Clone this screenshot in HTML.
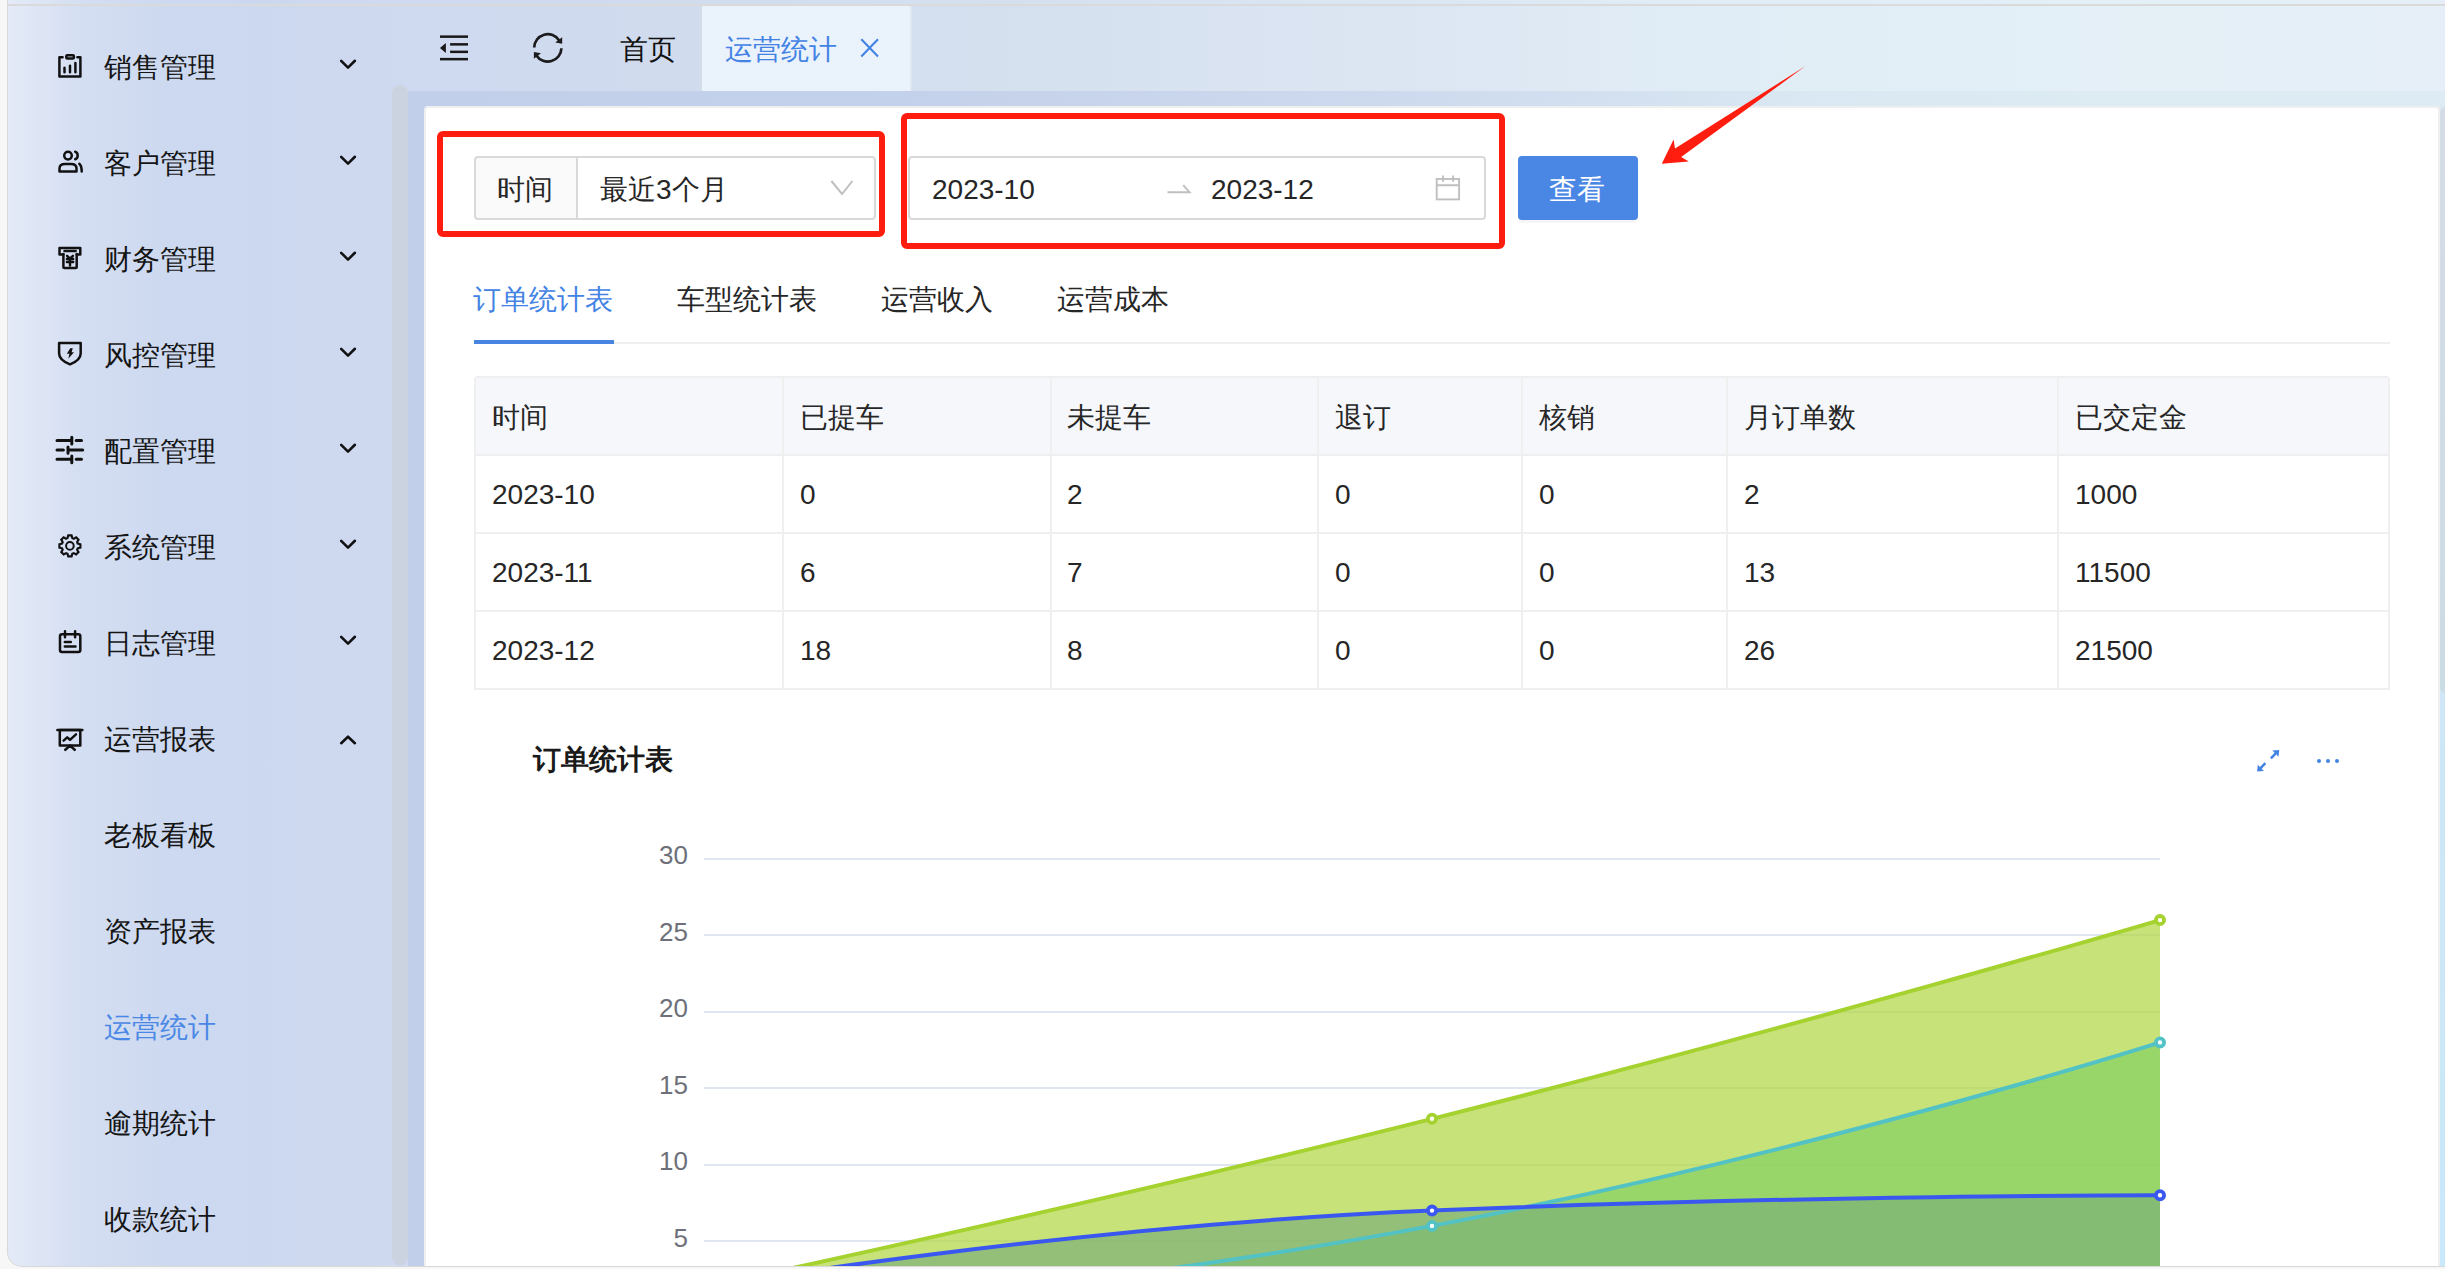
<!DOCTYPE html>
<html><head><meta charset="utf-8">
<style>
*{margin:0;padding:0;box-sizing:border-box}
html,body{width:2445px;height:1269px;overflow:hidden;background:#f7f7f7;font-family:"Liberation Sans",sans-serif}
.a{position:absolute}
.t{position:absolute;white-space:nowrap;font-size:28px;line-height:28px}
#app{position:absolute;left:7px;top:0px;width:2445px;height:1267px;border:1px solid #d9d9d9;border-right:none;border-top:none;border-radius:0 0 0 15px;overflow:hidden;
 background:linear-gradient(90deg,#e4eaf7 0px,#d4def2 75px,#cdd9f0 160px,#ccd8ef 250px,#cfd9f0 390px,#d0dbee 650px,#d5e0ef 1000px,#dce6f3 1400px,#e1edf6 1700px,#e3eff6 2000px,#e6eff7 2438px)}
#topline{position:absolute;left:7px;top:4px;width:2438px;height:2px;background:#dadada}
#sbar{position:absolute;left:392px;top:85px;width:16px;height:1180px;border-radius:8px;background:#cbd2e0}
#content{position:absolute;left:408px;top:91px;width:2037px;height:1175px;background:linear-gradient(90deg,#c2cfea 0px,#c4d1ea 500px,#cbd8ed 900px,#d3e0f0 1200px,#dae8f3 1400px,#ddebf3 1700px,#ddebf4 2037px)}
#card{position:absolute;left:424px;top:106px;width:2016px;height:1160px;background:#fff;border:2px solid #efefef;border-bottom:none;border-radius:4px 4px 0 0}
#rstrip{position:absolute;left:2440px;top:106px;width:5px;height:1160px;background:linear-gradient(180deg,#dce8f3 0px,#cfe6f6 500px,#c9e8f9 1160px)}
#rthumb{position:absolute;left:2440px;top:107px;width:12px;height:586px;border-radius:6px;background:linear-gradient(180deg,#d6dce5 0px,#ccdce4 586px)}
#botline{position:absolute;left:20px;top:1266px;width:2425px;height:1px;background:#d9d9d9}
</style></head>
<body>
<div id="app"></div>
<div id="topline"></div>
<svg class="a" style="left:50px;top:45px" width="40" height="40" viewBox="0 0 40 40" fill="none" stroke="#111" stroke-width="2.5" stroke-linecap="round" stroke-linejoin="round"><path d="M12.6,12.3 H9.4 V31.5 H30.4 V12.3 H27.4" /><rect x="16.3" y="10.3" width="7.6" height="3.2" rx="1"/><path d="M14.5,22.7 V27.2 M20,20.7 V27.2 M25.4,18.1 V27.2"/></svg>
<div class="t" style="left:104px;top:54px;color:#151515">销售管理</div>
<svg class="a" style="left:330px;top:48px" width="40" height="40" viewBox="0 0 40 40" fill="none" stroke="#111" stroke-width="2.6" stroke-linecap="round" stroke-linejoin="round"><path d="M11.2,12.8 L18,19.6 L24.9,12.8"/></svg>
<svg class="a" style="left:50px;top:143px" width="40" height="40" viewBox="0 0 40 40" fill="none" stroke="#111" stroke-width="2.5" stroke-linecap="round" stroke-linejoin="round"><circle cx="18" cy="12.6" r="3.8"/><path d="M9.5,28.4 V25.5 C9.5,22.5 11.5,21.1 15,21.1 H21 C24.5,21.1 26.5,22.5 26.5,25.5 V28.4 Z"/><path d="M25.2,8.7 C28.5,9.6 28.5,15.3 25.2,16.2"/><path d="M29.3,20.8 C31.2,22.3 31.7,24.5 31.7,28.6"/></svg>
<div class="t" style="left:104px;top:150px;color:#151515">客户管理</div>
<svg class="a" style="left:330px;top:144px" width="40" height="40" viewBox="0 0 40 40" fill="none" stroke="#111" stroke-width="2.6" stroke-linecap="round" stroke-linejoin="round"><path d="M11.2,12.8 L18,19.6 L24.9,12.8"/></svg>
<svg class="a" style="left:50px;top:239px" width="40" height="40" viewBox="0 0 40 40" fill="none" stroke="#111" stroke-width="2.5" stroke-linecap="round" stroke-linejoin="round"><path d="M13.4,15.6 H9.5 V9 H30.3 V15.6 H26.7"/><path d="M13.4,15 V28.3 C13.4,28.8 13.8,29 14.3,29 H25.8 C26.3,29 26.7,28.8 26.7,28.3 V15"/><path d="M14.5,12 H25.6"/><path d="M17.1,16.9 L20,19.6 L22.9,16.9 M16.9,19.9 H23.2 M16.9,23 H23.2 M20,19.6 V26.4"/></svg>
<div class="t" style="left:104px;top:246px;color:#151515">财务管理</div>
<svg class="a" style="left:330px;top:240px" width="40" height="40" viewBox="0 0 40 40" fill="none" stroke="#111" stroke-width="2.6" stroke-linecap="round" stroke-linejoin="round"><path d="M11.2,12.8 L18,19.6 L24.9,12.8"/></svg>
<svg class="a" style="left:50px;top:335px" width="40" height="40" viewBox="0 0 40 40" fill="none" stroke="#111" stroke-width="2.5" stroke-linecap="round" stroke-linejoin="round"><path d="M9.1,7.9 H30.7 V18.5 C30.7,23.5 26.5,26.8 20,29.4 C13.5,26.8 9.1,23.5 9.1,18.5 Z"/><path d="M20.2,13.2 L22.8,13.2 L21.6,17.2 L24,17.2 L18.3,23.7 L19.5,18.8 L16.9,18.8 Z" fill="#111" stroke="none"/></svg>
<div class="t" style="left:104px;top:342px;color:#151515">风控管理</div>
<svg class="a" style="left:330px;top:336px" width="40" height="40" viewBox="0 0 40 40" fill="none" stroke="#111" stroke-width="2.6" stroke-linecap="round" stroke-linejoin="round"><path d="M11.2,12.8 L18,19.6 L24.9,12.8"/></svg>
<svg class="a" style="left:50px;top:431px" width="40" height="40" viewBox="0 0 40 40" fill="none" stroke="#111" stroke-width="2.5" stroke-linecap="round" stroke-linejoin="round"><path d="M7,9.5 H21.8 M26.2,9.5 H31.5 M21.8,6.3 V13 M7,18.9 H13.4 M18,18.9 H32.7 M18,15.9 V22.3 M7,28.2 H21.8 M26.2,28.2 H31.5 M21.8,25 V31.7" stroke-width="3"/></svg>
<div class="t" style="left:104px;top:438px;color:#151515">配置管理</div>
<svg class="a" style="left:330px;top:432px" width="40" height="40" viewBox="0 0 40 40" fill="none" stroke="#111" stroke-width="2.6" stroke-linecap="round" stroke-linejoin="round"><path d="M11.2,12.8 L18,19.6 L24.9,12.8"/></svg>
<svg class="a" style="left:50px;top:527px" width="40" height="40" viewBox="0 0 40 40" fill="none" stroke="#111" stroke-width="2.5" stroke-linecap="round" stroke-linejoin="round"><path d="M17.50,11.06 L18.24,8.43 L21.56,8.43 L22.30,11.06 L23.75,11.66 L26.13,10.32 L28.48,12.67 L27.14,15.05 L27.74,16.50 L30.37,17.24 L30.37,20.56 L27.74,21.30 L27.14,22.75 L28.48,25.13 L26.13,27.48 L23.75,26.14 L22.30,26.74 L21.56,29.37 L18.24,29.37 L17.50,26.74 L16.05,26.14 L13.67,27.48 L11.32,25.13 L12.66,22.75 L12.06,21.30 L9.43,20.56 L9.43,17.24 L12.06,16.50 L12.66,15.05 L11.32,12.67 L13.67,10.32 L16.05,11.66 Z" stroke-linejoin="miter" stroke-width="2.2"/><circle cx="19.9" cy="18.9" r="3.8" stroke-width="2"/></svg>
<div class="t" style="left:104px;top:534px;color:#151515">系统管理</div>
<svg class="a" style="left:330px;top:528px" width="40" height="40" viewBox="0 0 40 40" fill="none" stroke="#111" stroke-width="2.6" stroke-linecap="round" stroke-linejoin="round"><path d="M11.2,12.8 L18,19.6 L24.9,12.8"/></svg>
<svg class="a" style="left:50px;top:623px" width="40" height="40" viewBox="0 0 40 40" fill="none" stroke="#111" stroke-width="2.5" stroke-linecap="round" stroke-linejoin="round"><rect x="10" y="11.3" width="20.3" height="17.6" rx="2"/><path d="M15,8.3 V14.2 M25.1,8.3 V14.2 M14.8,18.9 H20.8 M14.8,23.5 H25.5"/></svg>
<div class="t" style="left:104px;top:630px;color:#151515">日志管理</div>
<svg class="a" style="left:330px;top:624px" width="40" height="40" viewBox="0 0 40 40" fill="none" stroke="#111" stroke-width="2.6" stroke-linecap="round" stroke-linejoin="round"><path d="M11.2,12.8 L18,19.6 L24.9,12.8"/></svg>
<svg class="a" style="left:50px;top:719px" width="40" height="40" viewBox="0 0 40 40" fill="none" stroke="#111" stroke-width="2.5" stroke-linecap="round" stroke-linejoin="round"><path d="M7.4,10.9 H32.4"/><rect x="9.8" y="10.9" width="20.5" height="15.7"/><path d="M13.6,21.6 L17.2,18.4 L20,20.8 L26,15.3"/><path d="M20,26.6 L15.3,30.8 M20,26.6 L24.7,30.8"/></svg>
<div class="t" style="left:104px;top:726px;color:#151515">运营报表</div>
<svg class="a" style="left:330px;top:720px" width="40" height="40" viewBox="0 0 40 40" fill="none" stroke="#111" stroke-width="2.6" stroke-linecap="round" stroke-linejoin="round"><path d="M11.2,23.2 L18,16.7 L24.9,23.2"/></svg>
<div class="t" style="left:104px;top:822px;color:#151515">老板看板</div>
<div class="t" style="left:104px;top:918px;color:#151515">资产报表</div>
<div class="t" style="left:104px;top:1014px;color:#4a88e6">运营统计</div>
<div class="t" style="left:104px;top:1110px;color:#151515">逾期统计</div>
<div class="t" style="left:104px;top:1206px;color:#151515">收款统计</div>
<div id="sbar"></div>
<div class="a" style="left:700px;top:6px;width:212px;height:85px;background:#eaf2fc;border-left:2px solid #d5dbe7;border-right:2px solid #e0e6ef"></div>
<svg class="a" style="left:430px;top:25px" width="50" height="50" viewBox="0 0 50 50"><g fill="#181818"><rect x="10" y="10.4" width="28" height="2.5"/><rect x="20.1" y="18.1" width="17.9" height="2.5"/><rect x="20.1" y="25.6" width="17.9" height="2.5"/><rect x="10" y="32.9" width="28" height="2.5"/><path d="M15.9,18 L9.9,23 L15.9,28 Z"/></g></svg>
<svg class="a" style="left:523px;top:23px" width="50" height="50" viewBox="0 0 50 50"><g fill="none" stroke="#1c1c1e" stroke-width="2.7"><path d="M11.2,24.6 A13.6,13.6 0 0 1 36.2,17.4"/><path d="M38.4,25.2 A13.6,13.6 0 0 1 13.4,32.4"/></g><g fill="#1c1c1e"><path d="M39.2,14.2 L39.2,20.8 L32.3,19.6 Z"/><path d="M10.9,29.1 L10.9,35.8 L18,30.3 Z"/></g></svg>
<div class="t" style="left:620px;top:36px;color:#111">首页</div>
<div class="t" style="left:725px;top:36px;color:#4383e4">运营统计</div>
<svg class="a" style="left:855px;top:33px" width="30" height="30" viewBox="0 0 30 30"><path d="M6.3,6.3 L23,23.6 M23,6.3 L6.3,23.6" stroke="#4383e4" stroke-width="2.1" fill="none"/></svg>
<div id="content"></div>
<div id="card"></div>
<div id="rstrip"></div><div id="rthumb"></div>
<div class="a" style="left:437px;top:131px;width:448px;height:106px;border:6px solid #ff1d10;border-radius:6px"></div>
<div class="a" style="left:901px;top:113px;width:604px;height:136px;border:6px solid #ff1d10;border-radius:6px"></div>
<div class="a" style="left:474px;top:156px;width:104px;height:64px;background:#fafafa;border:2px solid #d9d9d9;border-right:none;border-radius:4px 0 0 4px"></div>
<div class="a" style="left:576px;top:156px;width:300px;height:64px;background:#fff;border:2px solid #d9d9d9;border-radius:0 4px 4px 0"></div>
<div class="t" style="left:497px;top:176px;color:#262626">时间</div>
<div class="t" style="left:600px;top:176px;color:#262626">最近3个月</div>
<svg class="a" style="left:820px;top:160px" width="60" height="60" viewBox="0 0 60 60"><path d="M11.4,21 L22,34 L32.4,21" fill="none" stroke="#bfbfbf" stroke-width="2"/></svg>
<div class="a" style="left:908px;top:156px;width:578px;height:64px;background:#fff;border:2px solid #d9d9d9;border-radius:4px"></div>
<div class="t" style="left:932px;top:176px;color:#262626">2023-10</div>
<div class="t" style="left:1211px;top:176px;color:#262626">2023-12</div>
<svg class="a" style="left:1150px;top:160px" width="60" height="60" viewBox="0 0 60 60"><path d="M17.5,32.2 H39.6 L33.2,25.1" fill="none" stroke="#bfbfbf" stroke-width="1.9"/></svg>
<svg class="a" style="left:1420px;top:160px" width="60" height="60" viewBox="0 0 60 60"><g fill="none" stroke="#bfbfbf" stroke-width="1.9"><rect x="16.7" y="19" width="22.4" height="20.4"/><path d="M16.7,25.3 H39.1 M23,15.4 V21.7 M33.1,15.4 V21.7"/></g></svg>
<div class="a" style="left:1518px;top:156px;width:120px;height:64px;background:#4a86e4;border-radius:4px;box-shadow:0 3px 1px rgba(0,0,0,0.04)"></div>
<div class="t" style="left:1549px;top:176px;color:#fff">查看</div>
<svg class="a" style="left:1640px;top:50px" width="180" height="130" viewBox="1640 50 180 130"><path d="M1805.1,66.3 L1675,148.6 L1673.6,139.6 L1661.8,163.7 L1688.8,161.4 L1681.2,157.1 Z" fill="#ff1d10"/></svg>
<div class="a" style="left:474px;top:342px;width:1916px;height:2px;background:#efefef"></div>
<div class="a" style="left:474px;top:340px;width:140px;height:4px;background:#4a84e2"></div>
<div class="t" style="left:473px;top:286px;color:#4383e4">订单统计表</div>
<div class="t" style="left:677px;top:286px;color:#262626">车型统计表</div>
<div class="t" style="left:881px;top:286px;color:#262626">运营收入</div>
<div class="t" style="left:1057px;top:286px;color:#262626">运营成本</div>
<div class="a" style="left:474px;top:376px;width:1916px;height:314px;border:2px solid #efefef;border-radius:4px 4px 0 0;overflow:hidden;background:#fff">
<div class="a" style="left:0;top:0;width:100%;height:78px;background:#f5f7fa"></div>
<div class="a" style="left:0;top:76px;width:100%;height:2px;background:#efefef"></div>
<div class="a" style="left:0;top:154px;width:100%;height:2px;background:#efefef"></div>
<div class="a" style="left:0;top:232px;width:100%;height:2px;background:#efefef"></div>
<div class="a" style="left:306px;top:0;width:2px;height:100%;background:#efefef"></div>
<div class="a" style="left:574px;top:0;width:2px;height:100%;background:#efefef"></div>
<div class="a" style="left:841px;top:0;width:2px;height:100%;background:#efefef"></div>
<div class="a" style="left:1045px;top:0;width:2px;height:100%;background:#efefef"></div>
<div class="a" style="left:1250px;top:0;width:2px;height:100%;background:#efefef"></div>
<div class="a" style="left:1581px;top:0;width:2px;height:100%;background:#efefef"></div>
</div>
<div class="t" style="left:492px;top:404px;color:#262626">时间</div>
<div class="t" style="left:800px;top:404px;color:#262626">已提车</div>
<div class="t" style="left:1067px;top:404px;color:#262626">未提车</div>
<div class="t" style="left:1335px;top:404px;color:#262626">退订</div>
<div class="t" style="left:1539px;top:404px;color:#262626">核销</div>
<div class="t" style="left:1744px;top:404px;color:#262626">月订单数</div>
<div class="t" style="left:2075px;top:404px;color:#262626">已交定金</div>
<div class="t" style="left:492px;top:481px;color:#262626">2023-10</div>
<div class="t" style="left:800px;top:481px;color:#262626">0</div>
<div class="t" style="left:1067px;top:481px;color:#262626">2</div>
<div class="t" style="left:1335px;top:481px;color:#262626">0</div>
<div class="t" style="left:1539px;top:481px;color:#262626">0</div>
<div class="t" style="left:1744px;top:481px;color:#262626">2</div>
<div class="t" style="left:2075px;top:481px;color:#262626">1000</div>
<div class="t" style="left:492px;top:559px;color:#262626">2023-11</div>
<div class="t" style="left:800px;top:559px;color:#262626">6</div>
<div class="t" style="left:1067px;top:559px;color:#262626">7</div>
<div class="t" style="left:1335px;top:559px;color:#262626">0</div>
<div class="t" style="left:1539px;top:559px;color:#262626">0</div>
<div class="t" style="left:1744px;top:559px;color:#262626">13</div>
<div class="t" style="left:2075px;top:559px;color:#262626">11500</div>
<div class="t" style="left:492px;top:637px;color:#262626">2023-12</div>
<div class="t" style="left:800px;top:637px;color:#262626">18</div>
<div class="t" style="left:1067px;top:637px;color:#262626">8</div>
<div class="t" style="left:1335px;top:637px;color:#262626">0</div>
<div class="t" style="left:1539px;top:637px;color:#262626">0</div>
<div class="t" style="left:1744px;top:637px;color:#262626">26</div>
<div class="t" style="left:2075px;top:637px;color:#262626">21500</div>
<div class="t" style="left:533px;top:746px;color:#1a1a1a;font-weight:bold">订单统计表</div>
<svg class="a" style="left:2250px;top:744px" width="36" height="36" viewBox="0 0 36 36"><g fill="#4383e4"><path d="M29.2,5.9 L22.4,6.6 L24.6,8.8 L20.0,13.4 L21.8,15.2 L26.4,10.6 L28.5,12.7 Z"/><path d="M7.1,27.6 L13.9,26.9 L11.7,24.7 L16.3,20.1 L14.5,18.3 L9.9,22.9 L7.8,20.8 Z"/></g></svg>
<div class="a" style="left:2317.2px;top:759px;width:4px;height:4px;border-radius:2px;background:#4383e4"></div>
<div class="a" style="left:2326.0px;top:759px;width:4px;height:4px;border-radius:2px;background:#4383e4"></div>
<div class="a" style="left:2334.8px;top:759px;width:4px;height:4px;border-radius:2px;background:#4383e4"></div>
<svg class="a" style="left:0;top:0" width="2445" height="1266" viewBox="0 0 2445 1266">
<rect x="704" y="1240" width="1456" height="2" fill="#e0e6f1"/>
<rect x="704" y="1164" width="1456" height="2" fill="#e0e6f1"/>
<rect x="704" y="1087" width="1456" height="2" fill="#e0e6f1"/>
<rect x="704" y="1011" width="1456" height="2" fill="#e0e6f1"/>
<rect x="704" y="934" width="1456" height="2" fill="#e0e6f1"/>
<rect x="704" y="858" width="1456" height="2" fill="#e0e6f1"/>
<path d="M704.00,1287.02 C704.00,1287.02 1069.81,1210.11 1432.00,1118.83 C1797.81,1026.63 2160.00,920.06 2160.00,920.06 L2160,1317.6 L704,1317.6 Z" fill="#b0d641" fill-opacity="0.7"/>
<path d="M704.00,1317.60 C704.00,1317.60 1072.17,1293.88 1432.00,1225.86 C1800.17,1156.27 2160.00,1042.38 2160.00,1042.38 L2160,1317.6 L704,1317.6 Z" fill="#83d263" fill-opacity="0.7"/>
<path d="M704.00,1287.02 C704.00,1287.02 1067.04,1225.94 1432.00,1210.57 C1795.04,1195.28 2160.00,1195.28 2160.00,1195.28 L2160,1317.6 L704,1317.6 Z" fill="#7eb077" fill-opacity="0.7"/>
<path d="M704.00,1287.02 C704.00,1287.02 1069.81,1210.11 1432.00,1118.83 C1797.81,1026.63 2160.00,920.06 2160.00,920.06" fill="none" stroke="#a5d22f" stroke-width="4" stroke-linejoin="round"/>
<path d="M704.00,1317.60 C704.00,1317.60 1072.17,1293.88 1432.00,1225.86 C1800.17,1156.27 2160.00,1042.38 2160.00,1042.38" fill="none" stroke="#52c2c4" stroke-width="4" stroke-linejoin="round"/>
<path d="M704.00,1287.02 C704.00,1287.02 1067.04,1225.94 1432.00,1210.57 C1795.04,1195.28 2160.00,1195.28 2160.00,1195.28" fill="none" stroke="#3a58f0" stroke-width="4" stroke-linejoin="round"/>
<circle cx="1432.0" cy="1118.8" r="4.1" fill="#fff" stroke="#a5d22f" stroke-width="3.8"/>
<circle cx="2160.0" cy="920.1" r="4.1" fill="#fff" stroke="#a5d22f" stroke-width="3.8"/>
<circle cx="1432.0" cy="1225.9" r="4.1" fill="#fff" stroke="#52c2c4" stroke-width="3.8"/>
<circle cx="2160.0" cy="1042.4" r="4.1" fill="#fff" stroke="#52c2c4" stroke-width="3.8"/>
<circle cx="1432.0" cy="1210.6" r="4.1" fill="#fff" stroke="#3a58f0" stroke-width="3.8"/>
<circle cx="2160.0" cy="1195.3" r="4.1" fill="#fff" stroke="#3a58f0" stroke-width="3.8"/>
</svg>
<div class="t" style="left:600px;top:1226px;width:88px;text-align:right;font-size:26px;line-height:24px;color:#6e7079">5</div>
<div class="t" style="left:600px;top:1149px;width:88px;text-align:right;font-size:26px;line-height:24px;color:#6e7079">10</div>
<div class="t" style="left:600px;top:1073px;width:88px;text-align:right;font-size:26px;line-height:24px;color:#6e7079">15</div>
<div class="t" style="left:600px;top:996px;width:88px;text-align:right;font-size:26px;line-height:24px;color:#6e7079">20</div>
<div class="t" style="left:600px;top:920px;width:88px;text-align:right;font-size:26px;line-height:24px;color:#6e7079">25</div>
<div class="t" style="left:600px;top:843px;width:88px;text-align:right;font-size:26px;line-height:24px;color:#6e7079">30</div>
</body></html>
